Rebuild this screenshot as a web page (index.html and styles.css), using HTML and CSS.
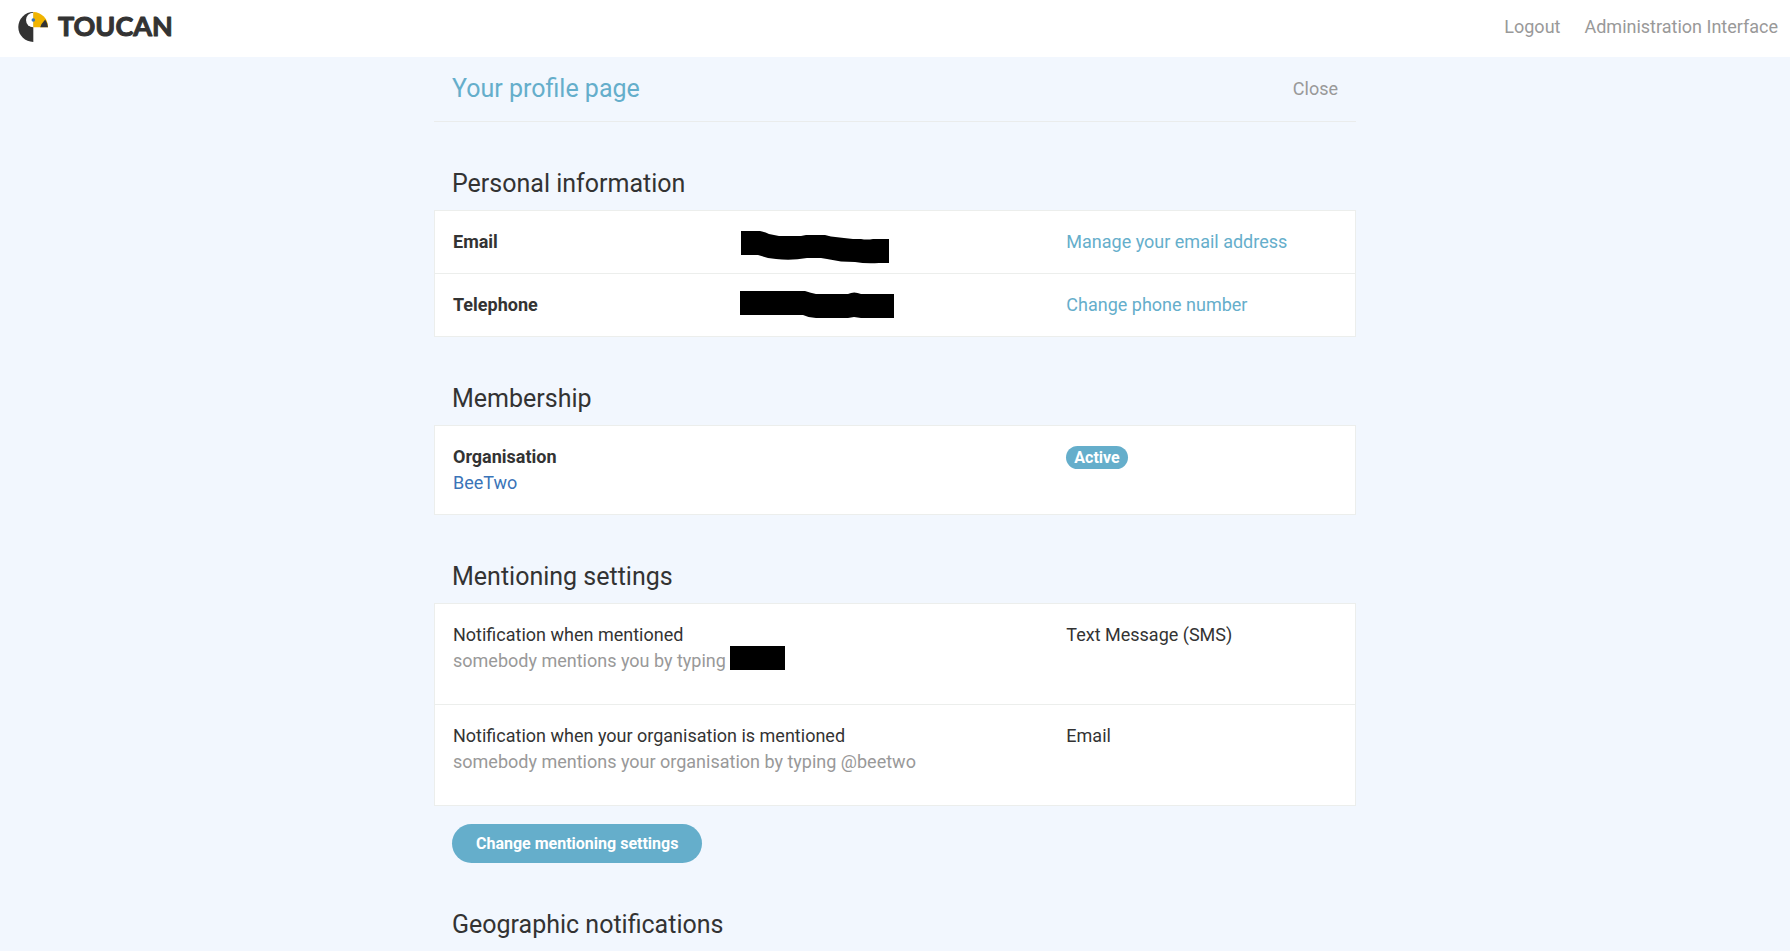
FILE: index.html
```html
<!DOCTYPE html>
<html lang="en">
<head>
<meta charset="utf-8">
<title>Your profile page</title>
<link rel="stylesheet" href="styles.css">
</head>
<body>
<header class="topbar">
  <a class="brand" href="#">
    <svg class="brand-mark" viewBox="0 0 30 30" aria-hidden="true">
      <path class="mark-dark" d="M15.300 0A15 15 0 0 0 15.300 30Z"/>
      <path class="mark-light" d="M15.300 .7A7.300 7.300 0 0 0 15.300 15.300Z"/>
      <path class="mark-beak" d="M15.300 0A15 15 0 0 1 30 15.300H15.300Z"/>
      <path class="mark-dark" d="M27.200 7.400A15 15 0 0 1 30 15.300H22.200Q23.200 11.500 27.200 7.400Z"/>
      <circle class="mark-eye" cx="15.300" cy="8" r="1.800"/>
    </svg>
    <svg class="brand-name" viewBox="0 0 116 30" role="img" aria-label="Toucan"><text x="0" y="24">TOUCAN</text></svg>
  </a>
  <nav class="topnav">
    <a href="#">Logout</a>
    <a href="#">Administration Interface</a>
  </nav>
</header>
<main class="page">
  <div class="page-head">
    <h1 class="page-title">Your profile page</h1>
    <a class="close" href="#">Close</a>
  </div>

  <section class="section">
    <h2 class="section-title">Personal information</h2>
    <div class="card">
      <div class="row">
        <div class="field">
          <strong class="field-label">Email</strong>
          <svg class="redacted" viewBox="0 0 154 34" aria-hidden="true"><path d="M0 2H19Q24 3 28 5L38 7H60L65 6H84L90 7.500 103 9 112 10H120Q126 11 132 10H148V34H138Q125 35 114 33L100 32.500 86 30 80 29H66Q50 32 35 30L27 29 17 26H0Z"/></svg>
        </div>
        <div><a class="action" href="#">Manage your email address</a></div>
      </div>
      <div class="row">
        <div class="field">
          <strong class="field-label">Telephone</strong>
          <svg class="redacted" viewBox="0 0 154 34" aria-hidden="true"><path d="M-1 -1H64Q70 1 75 2H107Q113 -1 120 2H153V26H120L113 25 107 26H75Q68 26 62 23H-1Z"/></svg>
        </div>
        <div><a class="action" href="#">Change phone number</a></div>
      </div>
    </div>
  </section>

  <section class="section">
    <h2 class="section-title">Membership</h2>
    <div class="card">
      <div class="row">
        <div>
          <strong class="line">Organisation</strong>
          <a class="org" href="#">BeeTwo</a>
        </div>
        <div><span class="badge">Active</span></div>
      </div>
    </div>
  </section>

  <section class="section">
    <h2 class="section-title">Mentioning settings</h2>
    <div class="card">
      <div class="row row-tall">
        <div>
          <span class="line">Notification when mentioned</span>
          <span class="hint">somebody mentions you by typing <span class="mask"></span></span>
        </div>
        <div>Text Message (SMS)</div>
      </div>
      <div class="row row-tall">
        <div>
          <span class="line">Notification when your organisation is mentioned</span>
          <span class="hint">somebody mentions your organisation by typing @beetwo</span>
        </div>
        <div>Email</div>
      </div>
    </div>
    <button class="button" type="button">Change mentioning settings</button>
  </section>

  <section class="section">
    <h2 class="section-title">Geographic notifications</h2>
  </section>
</main>
</body>
</html>
```
FILE: styles.css
```css
* {
  box-sizing: border-box;
}

html {
  background: #f2f7fe;
  overflow-x: hidden;
}

body {
  margin: 0;
  font: 18px/26px Roboto, "Liberation Sans", sans-serif;
  color: #333;
}

a {
  text-decoration: none;
}

.topbar {
  display: flex;
  align-items: center;
  justify-content: space-between;
  height: 57px;
  padding: 0 12px 4px 18px;
  background: #fff;
}

.brand {
  display: flex;
  align-items: center;
  gap: 10px;
}

.brand-mark {
  width: 30px;
  height: 30px;
}

.brand-name {
  width: 116px;
  height: 30px;
  overflow: visible;
  font: 700 27px/30px Lato, sans-serif;
  fill: #333;
  stroke: #333;
  stroke-width: 1px;
  stroke-linejoin: round;
}

.mark-dark {
  fill: #333;
}

.mark-light {
  fill: #fff;
}

.mark-beak {
  fill: #f0b400;
}

.mark-eye {
  fill: #3373bb;
}

.topnav {
  display: flex;
  gap: 24px;
}

.topnav a,
.close {
  color: #999;
}

.page {
  max-width: 922px;
  margin: 0 auto;
}

.page-head {
  display: flex;
  align-items: center;
  justify-content: space-between;
  padding: 17px 18px;
  border-bottom: 1px solid #eaecec;
}

.page-title,
.section-title {
  margin: 0;
  font-size: 25px;
  line-height: 30px;
  font-weight: 400;
}

.page-title,
.action {
  color: #65aecb;
}

.section {
  padding-top: 47px;
}

.section-title {
  padding: 0 18px 11px;
}

.card {
  background: #fff;
  border: 1px solid #eceeec;
}

.row {
  display: grid;
  grid-template-columns: 2fr 1fr;
}

.row > * {
  padding: 18px;
}

.row + .row {
  border-top: 1px solid #eceeec;
}

.row-tall > * {
  padding-bottom: 30px;
}

.field {
  display: flex;
}

.field-label {
  width: 288px;
}

.redacted {
  width: 154px;
  height: 34px;
  margin-bottom: -8px;
  overflow: visible;
}

.line,
.hint {
  display: block;
}

.hint {
  color: #999;
}

.org {
  color: #3a74b8;
}

.mask {
  display: inline-block;
  width: 55px;
  height: 24px;
  margin: -4px 0 -3px;
  background: #000;
}

.badge {
  display: inline-block;
  padding: 0 8px;
  border-radius: 12px;
  background: #65aecb;
  color: #fff;
  font-size: 16px;
  font-weight: 700;
  line-height: 23px;
}

.button {
  display: block;
  margin: 18px 18px 0;
  padding: 0 24px;
  border: 0;
  border-radius: 20px;
  background: #65aecb;
  color: #fff;
  font: 700 16px/39px Roboto, "Liberation Sans", sans-serif;
}
```
